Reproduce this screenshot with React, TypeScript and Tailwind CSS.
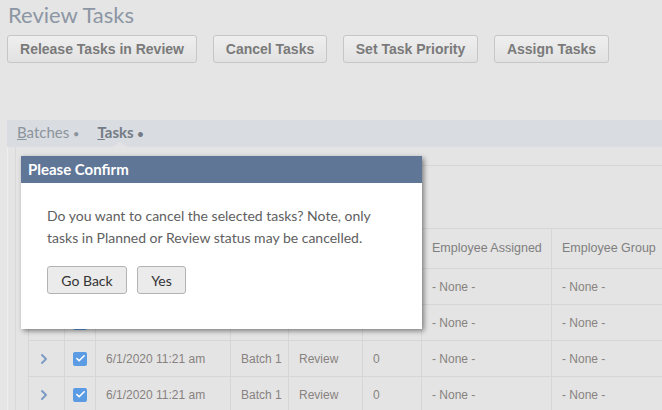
import { ChevronRight, Check } from 'lucide-react';

const cols = ['w-[36px]', 'w-[31px]', 'w-[135px]', 'w-[58px]', 'w-[74px]', 'w-[59px]', 'w-[130px]', 'w-[130px]'];

function Row() {
  const cells = [
    <ChevronRight key="a" size={16} strokeWidth={3} className="text-[#7d9cc4]" />,
    <span key="b" className="flex h-[14px] w-[14px] items-center justify-center rounded-[2px] bg-[#5a9be4]">
      <Check size={11} strokeWidth={3.5} className="text-white" />
    </span>,
    '6/1/2020 11:21 am',
    'Batch 1',
    'Review',
    '0',
    '- None -',
    '- None -',
  ];
  return (
    <div className="flex h-[36px] border-b border-[#d6d6d6]">
      {cells.map((c, i) => (
        <div
          key={i}
          className={`${cols[i]} flex shrink-0 items-center border-r border-[#d6d6d6] ${i === 0 ? 'pl-[7px]' : i === 1 ? 'justify-center' : 'pl-[10px]'}`}
        >
          {c}
        </div>
      ))}
    </div>
  );
}

export default function App() {
  const actions = [
    { label: 'Release Tasks in Review', w: 'w-[190px]' },
    { label: 'Cancel Tasks', w: 'w-[114px]' },
    { label: 'Set Task Priority', w: 'w-[135px]' },
    { label: 'Assign Tasks', w: 'w-[115px]' },
  ];

  return (
    <div className="relative h-[410px] w-[662px] overflow-hidden bg-[#e5e5e5] font-['Lato',sans-serif]">
      {/* Header */}
      <h1 className="pl-[8px] pt-[1px] text-[22px] leading-[28px] text-[#8c96a4]">Review Tasks</h1>
      <div className="mt-[6px] flex gap-[16px] pl-[7px]">
        {actions.map((a) => (
          <button
            key={a.label}
            className={`${a.w} h-[28px] rounded-[3px] border border-[#c6c6c6] bg-gradient-to-b from-[#efefef] to-[#e2e2e2] font-['Liberation_Sans',Arial,sans-serif] text-[14px] font-bold text-[#7a7a7a]`}
          >
            {a.label}
          </button>
        ))}
      </div>

      {/* Tabs */}
      <div className="relative ml-[7px] mt-[57px] flex h-[27px] items-center gap-[18px] bg-[#d9dce0] pb-[2px] pl-[10px] text-[15px]">
        <span className="text-[#8b939d]">
          <span className="underline">B</span>atches <span className="text-[11px]">•</span>
        </span>
        <span className="font-bold text-[#737b86]">
          <span className="underline">T</span>asks <span className="text-[11px]">•</span>
        </span>
        <span className="absolute bottom-0 left-[105px] h-0 w-0 border-b-[5px] border-l-[8px] border-r-[8px] border-b-[#e3e3e3] border-l-transparent border-r-transparent" />
      </div>

      {/* Panel */}
      <div className="ml-[7px] h-[263px] border-l border-[#efefef] bg-[#e4e4e4] pl-[7px]">
        <div className="h-full border-l border-[#d9d9d9] pl-[12px] pt-[18px]">
          <div className="h-[63px] border-t border-[#d6d6d6]" />
          <div className="border-l border-t border-[#d6d6d6] font-['Liberation_Sans',Arial,sans-serif] text-[12px] text-[#878280]">
            <div className="flex h-[40px] border-b border-[#d6d6d6] text-[12.5px] text-[#7f7f7f]">
              {cols.map((w, i) => (
                <div key={i} className={`${w} flex shrink-0 items-center border-r border-[#d6d6d6] pl-[10px]`}>
                  {i === 6 ? 'Employee Assigned' : i === 7 ? 'Employee Group' : ''}
                </div>
              ))}
            </div>
            <Row />
            <Row />
            <Row />
            <Row />
          </div>
        </div>
      </div>

      {/* Confirm dialog */}
      <div className="absolute left-[21px] top-[156px] h-[173px] w-[401px] bg-white shadow-[2px_2px_5px_rgba(0,0,0,0.45)]">
        <div className="flex h-[27px] items-center bg-[#5f7697] pl-[7px] text-[15px] font-bold text-white">Please Confirm</div>
        <div className="px-[26px] pt-[22px]">
          <p className="text-[14px] leading-[22px] text-[#606060]">
            Do you want to cancel the selected tasks? Note, only
            <br />
            tasks in Planned or Review status may be cancelled.
          </p>
          <div className="mt-[17px] flex gap-[10px]">
            <button className="h-[28px] w-[80px] rounded-[3px] border border-[#b3b3b3] bg-[#ebebeb] text-[14px] text-[#333]">Go Back</button>
            <button className="h-[28px] w-[49px] rounded-[3px] border border-[#b3b3b3] bg-[#ebebeb] text-[14px] text-[#333]">Yes</button>
          </div>
        </div>
      </div>
    </div>
  );
}
